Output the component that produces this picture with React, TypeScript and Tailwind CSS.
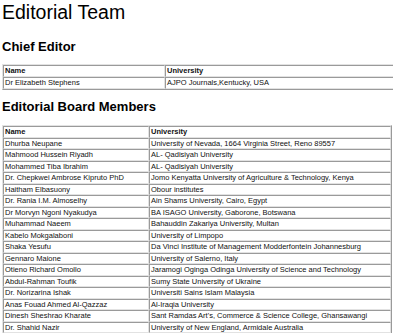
import React from "react";

const chief = [["Dr Elizabeth Stephens", "AJPO Journals,Kentucky, USA"]];

const board: [string, string][] = [
  ["Dhurba Neupane", "University of Nevada, 1664 Virginia Street, Reno 89557"],
  ["Mahmood Hussein Riyadh", "AL- Qadisiyah University"],
  ["Mohammed Tiba Ibrahim", "AL- Qadisiyah University"],
  ["Dr. Chepkwei Ambrose Kipruto PhD", "Jomo Kenyatta University of Agriculture & Technology, Kenya"],
  ["Haitham Elbasuony", "Obour institutes"],
  ["Dr. Rania I.M. Almoselhy", "Ain Shams University, Cairo, Egypt"],
  ["Dr Morvyn Ngoni Nyakudya", "BA ISAGO University, Gaborone, Botswana"],
  ["Muhammad Naeem", "Bahauddin Zakariya University, Multan"],
  ["Kabelo Mokgalaboni", "University of Limpopo"],
  ["Shaka Yesufu", "Da Vinci Institute of Management Modderfontein Johannesburg"],
  ["Gennaro Maione", "University of Salerno, Italy"],
  ["Otieno Richard Omollo", "Jaramogi Oginga Odinga University of Science and Technology"],
  ["Abdul-Rahman Toufik", "Sumy State University of Ukraine"],
  ["Dr. Norizarina Ishak", "Universiti Sains Islam Malaysia"],
  ["Anas Fouad Ahmed Al-Qazzaz", "Al-Iraqia University"],
  ["Dinesh Sheshrao Kharate", "Sant Ramdas Art's, Commerce & Science College, Ghansawangi"],
  ["Dr. Shahid Nazir", "University of New England, Armidale Australia"],
];

const cell =
  "border border-t-[#9a9a9a] border-l-[#9a9a9a] border-b-[#e2e2e2] border-r-[#e2e2e2] px-[1px] py-0 text-left align-middle whitespace-nowrap overflow-hidden";

function DataTable({
  rows,
  col1,
  width,
  leading,
}: {
  rows: string[][];
  col1: string;
  width: string;
  leading: string;
}) {
  return (
    <table
      className={`${width} table-fixed border-separate border-spacing-0 border border-t-[#e2e2e2] border-l-[#e2e2e2] border-b-[#9a9a9a] border-r-[#9a9a9a] text-[7.5px] text-[#111] ${leading}`}
    >
      <colgroup>
        <col className={col1} />
        <col />
      </colgroup>
      <thead>
        <tr>
          <th className={`${cell} font-bold`}>Name</th>
          <th className={`${cell} font-bold`}>University</th>
        </tr>
      </thead>
      <tbody>
        {rows.map((r, i) => (
          <tr key={i}>
            <td className={`${cell} font-normal`}>{r[0]}</td>
            <td className={`${cell} font-normal`}>{r[1]}</td>
          </tr>
        ))}
      </tbody>
    </table>
  );
}

export default function App() {
  return (
    <div
      className="w-[393px] h-[333px] overflow-hidden bg-white text-black pl-[2px]"
      style={{ fontFamily: '"Liberation Sans", Arial, sans-serif' }}
    >
      <h1 className="text-[19.5px] font-normal leading-[21px] mt-[2px]">Editorial Team</h1>
      <h2 className="text-[13px] font-bold leading-[15px] mt-[16px]">Chief Editor</h2>
      <div className="mt-[10px] w-[430px]">
        <DataTable rows={chief} col1="w-[162px]" width="w-[430px]" leading="leading-[10px]" />
      </div>
      <h2 className="text-[13px] font-bold leading-[15px] mt-[9px]">Editorial Board Members</h2>
      <div className="mt-[11px]">
        <DataTable rows={board} col1="w-[146px]" width="w-[390px]" leading="leading-[9.5px]" />
      </div>
    </div>
  );
}
